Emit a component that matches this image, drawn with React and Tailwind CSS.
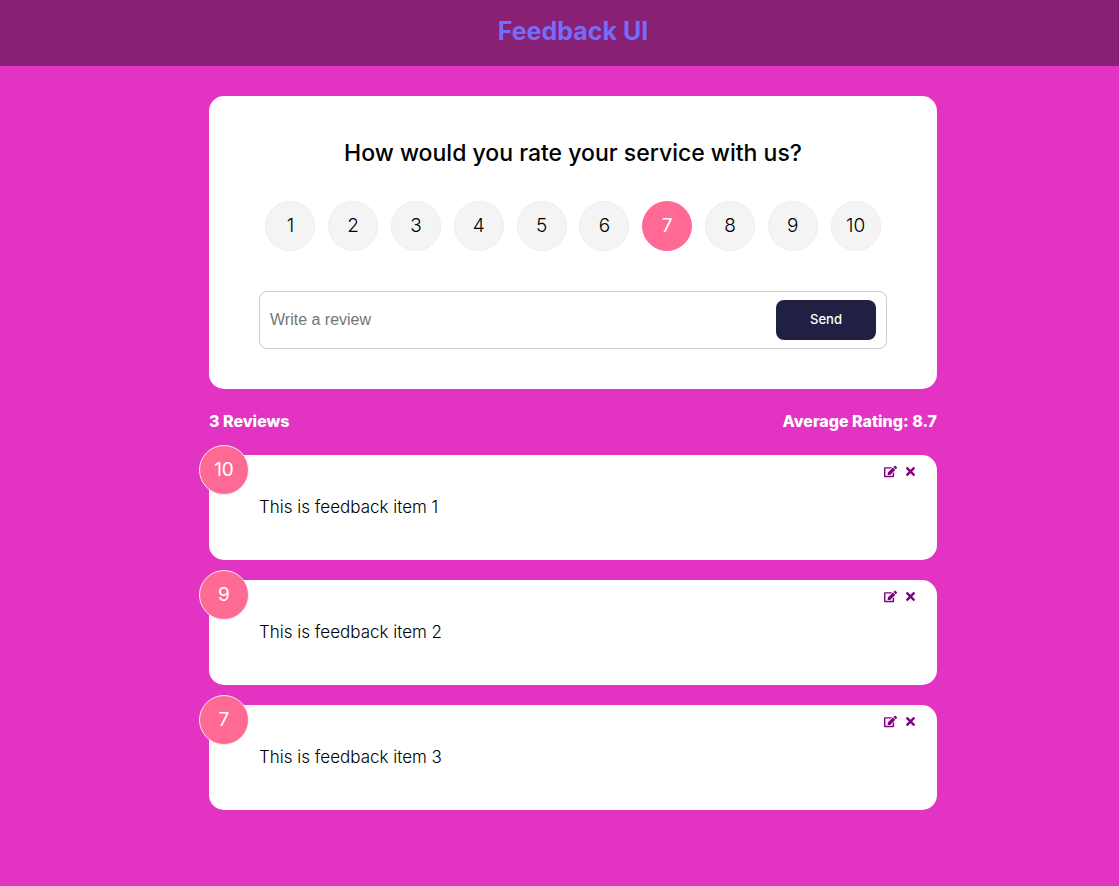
import { useState } from 'react';
import { FaEdit, FaTimes } from 'react-icons/fa';

const RATINGS = [1, 2, 3, 4, 5, 6, 7, 8, 9, 10];

const REVIEWS = [
  { id: 1, rating: 10, text: 'This is feedback item 1' },
  { id: 2, rating: 9, text: 'This is feedback item 2' },
  { id: 3, rating: 7, text: 'This is feedback item 3' },
];

function Header() {
  return (
    <header className="bg-[#882074] pl-[27px]">
      <h1 className="pt-3 pb-4 text-center text-[25px] leading-[38px] font-bold text-[#746dfb]">
        Feedback UI
      </h1>
    </header>
  );
}

function RatingSelect({ selected, onSelect }) {
  return (
    <div role="radiogroup" aria-label="Rating" className="mt-[30px] mb-10 flex justify-around">
      {RATINGS.map((value) => (
        <label
          key={value}
          className="relative flex size-[50px] cursor-pointer items-center justify-center rounded-full border border-[#eeeeee] bg-[#f4f4f4] text-[19px] font-light has-checked:border-[#ff6a95] has-checked:bg-[#ff6a95] has-checked:font-normal has-checked:text-white"
        >
          <input
            type="radio"
            name="rating"
            value={value}
            checked={selected === value}
            onChange={() => onSelect(value)}
            className="absolute inset-0 size-full cursor-pointer appearance-none rounded-full"
          />
          {value}
        </label>
      ))}
    </div>
  );
}

function FeedbackForm() {
  const [rating, setRating] = useState(7);
  const [text, setText] = useState('');

  return (
    <form
      onSubmit={(event) => event.preventDefault()}
      className="rounded-[15px] bg-white px-[50px] py-10"
    >
      <h2 className="text-center text-[23px] leading-[35px] font-medium">
        How would you rate your service with us?
      </h2>
      <RatingSelect selected={rating} onSelect={setRating} />
      <div className="flex items-center rounded-lg border border-[#cccccc] px-[10px] py-2">
        <input
          type="text"
          aria-label="Write a review"
          placeholder="Write a review"
          value={text}
          onChange={(event) => setText(event.target.value)}
          className="min-w-0 grow font-['Liberation_Sans',sans-serif] text-base outline-none placeholder:text-[#757575]"
        />
        <button
          type="submit"
          className="h-10 w-[100px] rounded-lg bg-[#202142] text-[13px] font-medium text-white"
        >
          Send
        </button>
      </div>
    </form>
  );
}

function FeedbackCard({ rating, text }) {
  return (
    <li className="relative rounded-[15px] bg-white px-[50px] py-10">
      <span className="absolute -top-[10px] -left-[10px] flex size-[50px] items-center justify-center rounded-full border border-[#eeeeee] bg-[#ff6a95] text-[19px] text-white">
        {rating}
      </span>
      <div className="absolute top-[10px] right-5 flex gap-[7px] text-[13px] text-[#800080]">
        <button type="button" aria-label="Edit review">
          <FaEdit />
        </button>
        <button type="button" aria-label="Delete review">
          <FaTimes />
        </button>
      </div>
      <p className="text-[17px] leading-[25px] font-light">{text}</p>
    </li>
  );
}

export default function App() {
  return (
    <div className="min-h-screen bg-[#e333c3] font-['Inter',sans-serif] text-base text-black">
      <Header />
      <div className="pl-[27px]">
        <main className="mx-auto max-w-[768px] px-5 pt-[30px]">
          <FeedbackForm />
          <div className="mt-5 mb-[22px] flex justify-between leading-6 font-extrabold text-white">
            <p>3 Reviews</p>
            <p>Average Rating: 8.7</p>
          </div>
          <ul className="flex flex-col gap-5">
            {REVIEWS.map((review) => (
              <FeedbackCard key={review.id} rating={review.rating} text={review.text} />
            ))}
          </ul>
        </main>
      </div>
    </div>
  );
}
